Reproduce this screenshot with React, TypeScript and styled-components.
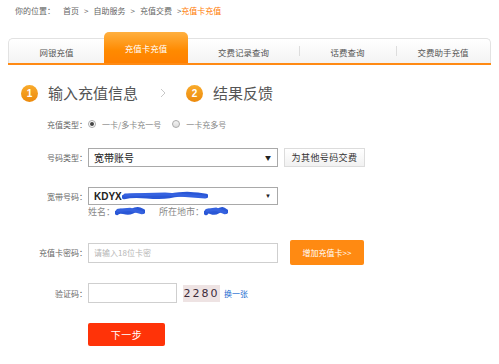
import React from 'react';
import styled, { createGlobalStyle } from 'styled-components';

const GlobalStyle = createGlobalStyle`
  html, body {
    margin: 0;
    padding: 0;
    background: #fff;
  }
  body {
    font-family: "Noto Sans CJK SC", "Noto Sans", sans-serif;
    color: #666;
  }
  * {
    box-sizing: border-box;
  }
`;

const Page = styled.div`
  width: 499px;
  height: 364px;
  overflow: hidden;
`;

const Crumbs = styled.div`
  display: flex;
  align-items: center;
  height: 17px;
  padding: 4px 0 0 15px;
  font-size: 8px;
  line-height: 12px;
  color: #666;
`;

const Crumb = styled.span<{ $current?: boolean; $gap?: number }>`
  color: ${(p) => (p.$current ? '#ff7a00' : '#666')};
  margin-left: ${(p) => p.$gap ?? 0}px;
`;

const CrumbSep = styled.span<{ $tight?: boolean }>`
  margin: ${(p) => (p.$tight ? '0 0 0 5px' : '0 5px')};
`;

const TabBar = styled.div`
  display: flex;
  align-items: flex-end;
  width: 483px;
  margin: 15px 8px 0;
  border-bottom: 2px solid #ff8a14;
`;

const Tab = styled.div<{ $w: number; $active?: boolean; $divider?: boolean; $edge?: 'left' | 'right' }>`
  position: relative;
  width: ${(p) => p.$w}px;
  height: ${(p) => (p.$active ? 31 : 25)}px;
  display: flex;
  align-items: center;
  justify-content: center;
  font-size: 8.5px;
  color: ${(p) => (p.$active ? '#fff' : '#555')};
  background: ${(p) =>
    p.$active
      ? 'linear-gradient(#ffb040, #ff8a00 60%, #ff8000)'
      : 'linear-gradient(#ffffff, #f3f3f3)'};
  border-top: ${(p) => (p.$active ? 'none' : '1px solid #e2e2e2')};
  border-left: ${(p) => (p.$edge === 'left' ? '1px solid #e2e2e2' : 'none')};
  border-right: ${(p) => (p.$edge === 'right' ? '1px solid #e2e2e2' : 'none')};
  border-radius: ${(p) =>
    p.$active
      ? '5px 5px 0 0'
      : p.$edge === 'left'
      ? '5px 0 0 0'
      : p.$edge === 'right'
      ? '0 5px 0 0'
      : '0'};
  padding-top: ${(p) => (p.$active ? '0' : '2px')};

  &::before {
    content: '';
    display: ${(p) => (p.$divider ? 'block' : 'none')};
    position: absolute;
    left: 0;
    top: 7px;
    width: 1px;
    height: 10px;
    background: #ddd;
  }
`;

const Steps = styled.div`
  display: flex;
  align-items: center;
  height: 18px;
  margin-top: 19px;
  padding-left: 21px;
`;

const StepNum = styled.span`
  width: 17px;
  height: 17px;
  border-radius: 50%;
  background: linear-gradient(#f9ab2c, #ec8a0c);
  color: #fff;
  font-family: "Liberation Sans", Arial, sans-serif;
  font-weight: bold;
  font-size: 10px;
  display: flex;
  align-items: center;
  justify-content: center;
  margin-right: 10px;
`;

const StepText = styled.span`
  font-size: 15px;
  color: #555;
  line-height: 18px;
`;

const StepArrow = styled.svg`
  margin: 0 20px 0 22px;
`;

const Form = styled.div`
  display: flex;
  flex-direction: column;
`;

const Row = styled.div<{ $h: number; $mt: number }>`
  display: flex;
  align-items: center;
  height: ${(p) => p.$h}px;
  margin-top: ${(p) => p.$mt}px;
`;

const Label = styled.span`
  width: 88px;
  flex-shrink: 0;
  text-align: right;
  padding-right: 1px;
  font-size: 8px;
  color: #666;
`;

const Field = styled.div`
  display: flex;
  align-items: center;
`;

const Radio = styled.span<{ $checked?: boolean }>`
  width: 8px;
  height: 8px;
  border-radius: 50%;
  border: 1px solid #aaa;
  background: ${(p) => (p.$checked ? '#fff' : 'linear-gradient(#f4f4f4, #dcdcdc)')};
  display: flex;
  align-items: center;
  justify-content: center;
  margin: 0 6px 0 ${(p) => (p.$checked ? 0 : 11)}px;

  &::after {
    content: '';
    display: ${(p) => (p.$checked ? 'block' : 'none')};
    width: 4px;
    height: 4px;
    border-radius: 50%;
    background: #444;
  }
`;

const RadioText = styled.span`
  font-size: 8px;
  color: #888;
`;

const Select = styled.div<{ $bold?: boolean }>`
  width: 190px;
  height: ${(p) => (p.$bold ? 18 : 19)}px;
  border: 1px solid #a9a9a9;
  display: flex;
  align-items: center;
  padding: 0 6px 0 5px;
  font-size: 10px;
  color: #222;
  font-weight: ${(p) => (p.$bold ? 'bold' : 'normal')};
  font-family: ${(p) =>
    p.$bold ? '"Liberation Sans", Arial, sans-serif' : '"Noto Sans CJK SC", sans-serif'};
  background: #fff;
`;

const SelectValue = styled.span`
  flex: 1;
  display: flex;
  align-items: center;
`;

const Caret = styled.span`
  font-size: 6px;
  color: #222;
`;

const GhostButton = styled.div`
  margin-left: 6px;
  width: 81px;
  height: 19px;
  border: 1px solid #dcdcdc;
  background: linear-gradient(#ffffff, #f1f1f1);
  display: flex;
  align-items: center;
  justify-content: center;
  font-size: 9px;
  letter-spacing: 0.4px;
  color: #333;
`;

const Info = styled.div`
  display: flex;
  align-items: center;
  font-size: 9px;
  color: #888;
`;

const InfoLabel = styled.span<{ $gap?: number }>`
  margin-left: ${(p) => p.$gap ?? 0}px;
`;

const Input = styled.input<{ $w: number }>`
  width: ${(p) => p.$w}px;
  height: 20px;
  border: 1px solid #cfcfcf;
  padding: 0 5px;
  font-size: 8px;
  font-family: "Noto Sans CJK SC", sans-serif;
  outline: none;
  background: #fff;

  &::placeholder {
    color: #b5b5b5;
  }
`;

const OrangeButton = styled.div`
  margin-left: 12px;
  width: 74px;
  height: 25px;
  border-radius: 2px;
  background: #ff8a12;
  color: #fff;
  font-size: 8px;
  display: flex;
  align-items: center;
  justify-content: center;
`;

const Captcha = styled.span`
  margin-left: 6px;
  width: 37px;
  height: 17px;
  background: #eee3e3;
  display: flex;
  align-items: center;
  justify-content: center;
  font-family: "DejaVu Sans", sans-serif;
  font-size: 11px;
  letter-spacing: 2px;
  color: #3b2a3a;
`;

const Link = styled.a`
  margin-left: 4px;
  font-size: 8px;
  color: #1c6dd0;
  text-decoration: none;
`;

const NextButton = styled.div`
  width: 77px;
  height: 23px;
  border-radius: 2px;
  background: #ff3308;
  color: #fff;
  font-size: 10px;
  display: flex;
  align-items: center;
  justify-content: center;
  letter-spacing: 0.5px;
`;

const Indent = styled.div`
  margin-left: 88px;
`;

const Scribble = ({ w, h = 10 }: { w: number; h?: number }) => (
  <svg width={w} height={h} viewBox={`0 0 ${w} ${h}`}>
    <path
      d={`M2 ${h * 0.6} C ${w * 0.2} ${h * 0.2}, ${w * 0.35} ${h * 0.8}, ${w * 0.55} ${h * 0.5} S ${w * 0.8} ${h * 0.3}, ${w - 2} ${h * 0.5}`}
      stroke="#2a57d6"
      strokeWidth={h * 0.45}
      fill="none"
      strokeLinecap="round"
    />
    <path
      d={`M3 ${h * 0.4} L ${w * 0.5} ${h * 0.3} L ${w - 3} ${h * 0.6}`}
      stroke="#3562e0"
      strokeWidth={h * 0.3}
      fill="none"
      strokeLinecap="round"
    />
  </svg>
);

const tabs = [
  { label: '网银充值', w: 96, edge: 'left' as const },
  { label: '充值卡充值', w: 84, active: true },
  { label: '交费记录查询', w: 111 },
  { label: '话费查询', w: 97, divider: true },
  { label: '交费助手充值', w: 95, divider: true, edge: 'right' as const },
];

export default function App() {
  return (
    <Page>
      <GlobalStyle />
      <Crumbs>
        <Crumb>你的位置：</Crumb>
        <Crumb $gap={8}>首页</Crumb>
        <CrumbSep>&gt;</CrumbSep>
        <Crumb>自助服务</Crumb>
        <CrumbSep>&gt;</CrumbSep>
        <Crumb>充值交费</Crumb>
        <CrumbSep $tight>&gt;</CrumbSep>
        <Crumb $current>充值卡充值</Crumb>
      </Crumbs>

      <TabBar>
        {tabs.map((t) => (
          <Tab key={t.label} $w={t.w} $active={t.active} $divider={t.divider} $edge={t.edge}>
            {t.label}
          </Tab>
        ))}
      </TabBar>

      <Steps>
        <StepNum>1</StepNum>
        <StepText>输入充值信息</StepText>
        <StepArrow width="6" height="10" viewBox="0 0 6 10">
          <path d="M1 1 L5 5 L1 9" stroke="#c8c8c8" strokeWidth="1" fill="none" />
        </StepArrow>
        <StepNum>2</StepNum>
        <StepText>结果反馈</StepText>
      </Steps>

      <Form>
        <Row $h={12} $mt={16}>
          <Label>充值类型：</Label>
          <Field>
            <Radio $checked />
            <RadioText>一卡/多卡充一号</RadioText>
            <Radio />
            <RadioText>一卡充多号</RadioText>
          </Field>
        </Row>

        <Row $h={19} $mt={18}>
          <Label>号码类型：</Label>
          <Select>
            <SelectValue>宽带账号</SelectValue>
            <Caret>▼</Caret>
          </Select>
          <GhostButton>为其他号码交费</GhostButton>
        </Row>

        <Row $h={18} $mt={20}>
          <Label>宽带号码：</Label>
          <Select $bold>
            <SelectValue>
              KDYX
              <Scribble w={86} />
            </SelectValue>
            <Caret>▼</Caret>
          </Select>
        </Row>

        <Row $h={12} $mt={0}>
          <Indent>
            <Info>
              姓名：
              <Scribble w={30} h={11} />
              <InfoLabel $gap={14}>所在地市：</InfoLabel>
              <Scribble w={24} h={11} />
            </Info>
          </Indent>
        </Row>

        <Row $h={25} $mt={23}>
          <Label>充值卡密码：</Label>
          <Input $w={190} placeholder="请输入18位卡密" />
          <OrangeButton>增加充值卡&gt;&gt;</OrangeButton>
        </Row>

        <Row $h={20} $mt={18}>
          <Label>验证码：</Label>
          <Input $w={89} />
          <Captcha>2280</Captcha>
          <Link href="#">换一张</Link>
        </Row>

        <Row $h={23} $mt={20}>
          <Indent>
            <NextButton>下一步</NextButton>
          </Indent>
        </Row>
      </Form>
    </Page>
  );
}
